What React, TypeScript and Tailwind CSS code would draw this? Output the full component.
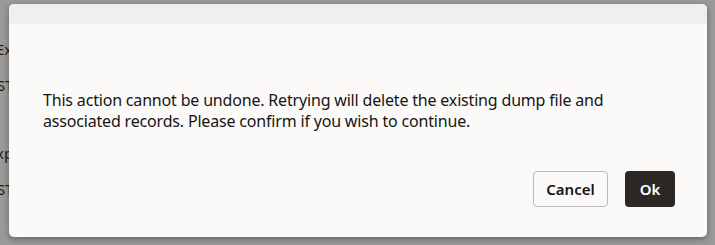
import React from "react";

export default function App() {
  return (
    <div className="w-[715px] h-[245px] bg-[#9b9a99] overflow-hidden relative" style={{ fontFamily: '"Noto Sans", "Open Sans", sans-serif' }}>
      <div className="absolute left-0 top-0 h-full w-[12px] text-[15px] text-[#1d1b1a] leading-none">
        <div className="absolute left-[-4px] top-[42px]">Ex</div>
        <div className="absolute left-[-3px] top-[78px]">ST</div>
        <div className="absolute left-[-4px] top-[146px]">xp</div>
        <div className="absolute left-[-3px] top-[182px]">ST</div>
      </div>
      <div className="absolute left-[9px] top-[4px] w-[698px] h-[233px] bg-[#fcfaf9] rounded-[5px] shadow-[0_2px_6px_rgba(0,0,0,0.35)] flex flex-col overflow-hidden">
        <div className="h-[20px] bg-[#f1efee] shrink-0" />
        <div className="flex-1 flex flex-col pl-[34px] pr-[32px]">
          <p className="mt-[66px] text-[16px] leading-[21px] tracking-[-0.18px] text-[#161513]">
            This action cannot be undone. Retrying will delete the existing dump file and
            <br />
            associated records. Please confirm if you wish to continue.
          </p>
          <div className="mt-[39px] flex justify-end gap-[17px]">
            <button className="w-[75px] h-[36px] rounded-[4px] border border-[#bcb8b5] bg-[#fcfaf9] text-[15px] font-semibold text-[#161513]">
              Cancel
            </button>
            <button className="w-[50px] h-[36px] rounded-[4px] bg-[#2b2826] text-[15px] font-semibold text-white">
              Ok
            </button>
          </div>
        </div>
      </div>
    </div>
  );
}
